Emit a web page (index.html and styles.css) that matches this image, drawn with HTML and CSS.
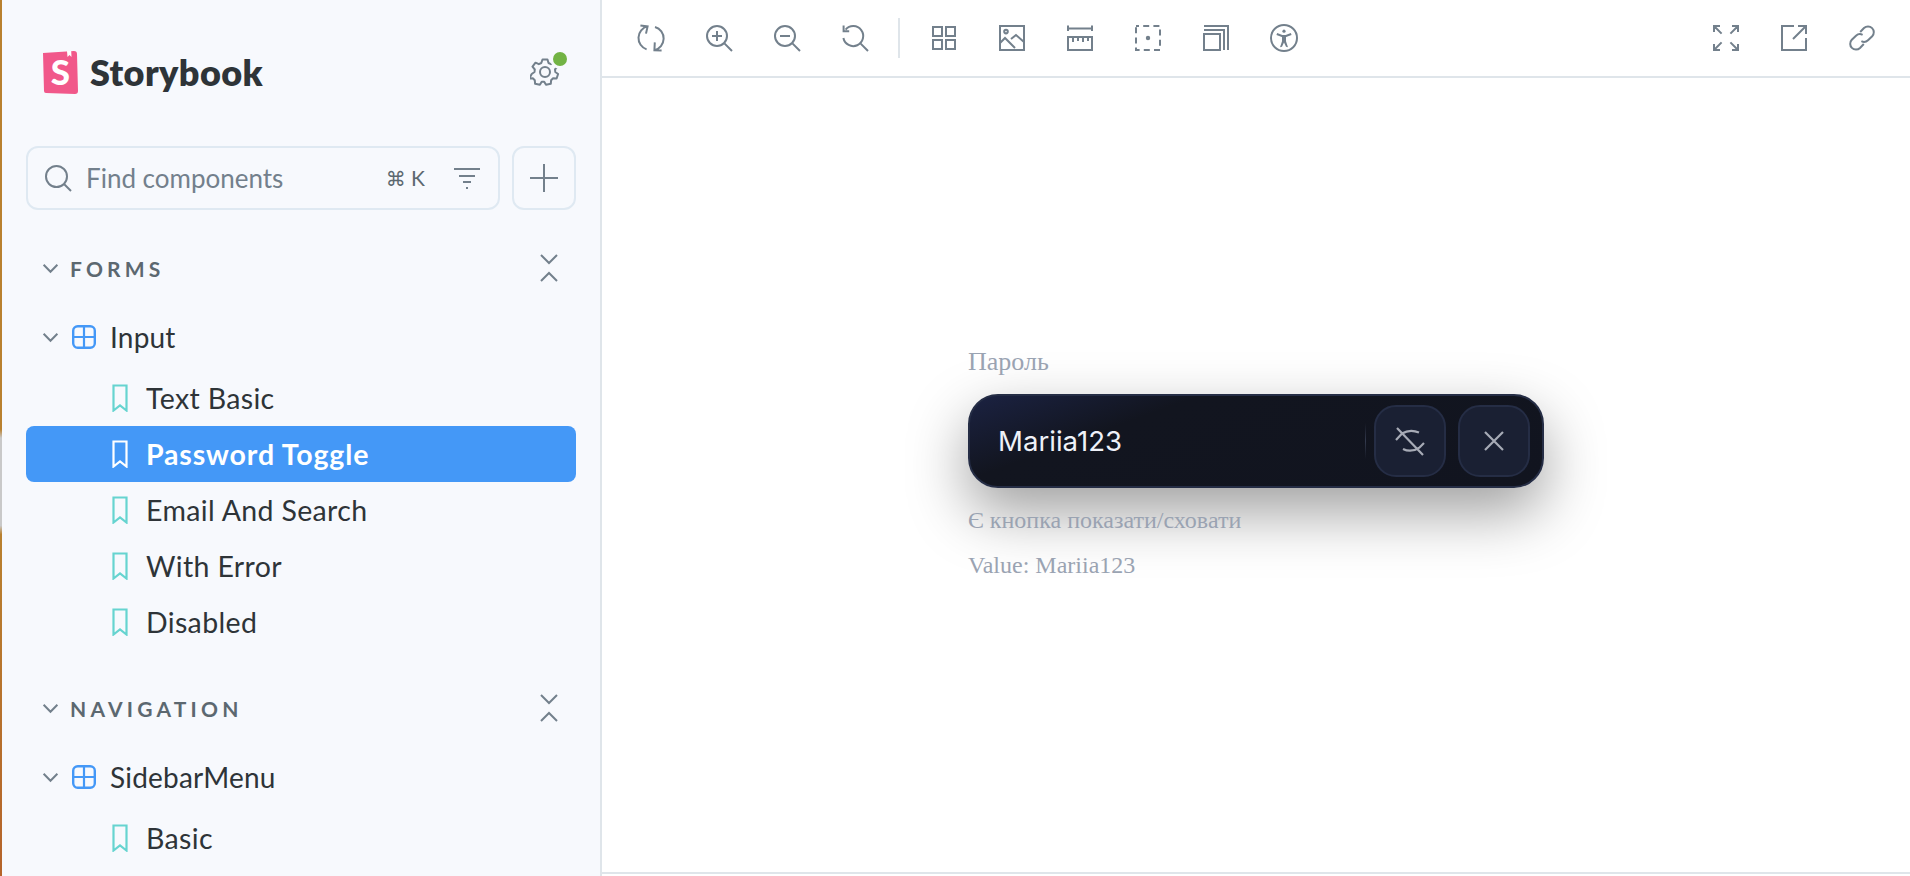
FILE: index.html
```html
<!DOCTYPE html>
<html lang="en">

<head>
    <meta charset="utf-8">
    <title>Storybook</title>
    <link rel="stylesheet" href="styles.css">
</head>

<body>
    <svg class="defs" width="0" height="0">
        <symbol id="bookmark" viewBox="0 0 16 28">
            <path d="M1.500 1.500h13v25L8 21.500l-6.500 5z" fill="none" stroke="currentColor" stroke-width="2.200" />
        </symbol>
        <symbol id="grid" viewBox="0 0 24 24">
            <rect x="1.200" y="1.200" width="21.600" height="21.600" rx="4.500" fill="none" stroke="#4498f7" stroke-width="2.400" />
            <path d="M12 1v22M1 12h22" stroke="#4498f7" stroke-width="2.200" />
        </symbol>
        <symbol id="chevron" viewBox="0 0 18 12">
            <path d="M1.500 2L9 9.500 16.500 2" fill="none" stroke="#73808c" stroke-width="2.200" />
        </symbol>
        <symbol id="collapse" viewBox="0 0 18 28">
            <path d="M1 1l8 8 8-8M1 27l8-8 8 8" fill="none" stroke="#73808c" stroke-width="2" />
        </symbol>
    </svg>

    <div class="window-edge"></div>

    <aside class="sidebar">
        <div class="brand">
            <div class="logo">
                <svg class="logo-mark" width="36" height="44" viewBox="0 0 36 44">
                    <path d="M1 3L32 1q3 0 3 3l1 37q0 3-3 3L4 43q-2 0-2-2z" fill="#f1588a" />
                    <path d="M25 1l.5 6 2-2 2 2-.3-6z" fill="#fff" />
                    <text x="18.500" y="34.500" class="logo-s">S</text>
                </svg>
                <span class="logo-name">Storybook</span>
            </div>
            <div class="settings">
                <svg width="30" height="30" viewBox="0 0 30 30" fill="none" stroke="#73808c" stroke-width="2">
                    <path d="M12.500 2.500h5l1 3.500 2.500 1.200 3.300-1.500 3 4-2.300 2.800.3 2.500 2.800 2-1.500 4.500-3.500-.2-2 2-.3 3.500-4.800 1-1.800-3h-2.500l-1.800 3-4.800-1-.3-3.500-2-2-3.500.2L1.700 17l2.800-2 .3-2.500L2.500 9.700l3-4L8.800 7.200 11.300 6z" stroke-linejoin="round" />
                    <circle cx="15" cy="15" r="5" />
                </svg>
                <span class="status-dot"></span>
            </div>
        </div>

        <div class="search-row">
            <div class="search">
                <svg width="28" height="28" viewBox="0 0 28 28" fill="none" stroke="#73808c" stroke-width="2">
                    <circle cx="12.500" cy="12.500" r="10.500" />
                    <path d="M20 20l7 7" />
                </svg>
                <span class="search-text">Find components</span>
                <span class="shortcut"><span class="cmd">⌘</span> K</span>
                <svg width="26" height="24" viewBox="0 0 26 24" fill="none" stroke="#73808c" stroke-width="2">
                    <path d="M0 3h26M5 10h16M9 16h8M12 22h2" />
                </svg>
            </div>
            <div class="add">
                <svg width="28" height="28" viewBox="0 0 28 28" stroke="#73808c" stroke-width="2">
                    <path d="M14 0v28M0 14h28" />
                </svg>
            </div>
        </div>

        <section class="section">
            <div class="section-head">
                <svg class="chev" width="17" height="11"><use href="#chevron" /></svg>
                <span class="section-title">FORMS</span>
                <svg class="collapse" width="18" height="28"><use href="#collapse" /></svg>
            </div>
            <div class="component">
                <svg class="chev" width="17" height="11"><use href="#chevron" /></svg>
                <svg width="24" height="24"><use href="#grid" /></svg>
                <span>Input</span>
            </div>
            <ul class="stories">
                <li class="story"><svg width="16" height="28"><use href="#bookmark" /></svg>Text Basic</li>
                <li class="story active"><svg width="16" height="28"><use href="#bookmark" /></svg>Password Toggle</li>
                <li class="story"><svg width="16" height="28"><use href="#bookmark" /></svg>Email And Search</li>
                <li class="story"><svg width="16" height="28"><use href="#bookmark" /></svg>With Error</li>
                <li class="story"><svg width="16" height="28"><use href="#bookmark" /></svg>Disabled</li>
            </ul>
        </section>

        <section class="section">
            <div class="section-head">
                <svg class="chev" width="17" height="11"><use href="#chevron" /></svg>
                <span class="section-title">NAVIGATION</span>
                <svg class="collapse" width="18" height="28"><use href="#collapse" /></svg>
            </div>
            <div class="component">
                <svg class="chev" width="17" height="11"><use href="#chevron" /></svg>
                <svg width="24" height="24"><use href="#grid" /></svg>
                <span>SidebarMenu</span>
            </div>
            <ul class="stories">
                <li class="story"><svg width="16" height="28"><use href="#bookmark" /></svg>Basic</li>
            </ul>
        </section>
    </aside>

    <main class="main">
        <div class="toolbar">
            <div class="tools">
                <!-- sync -->
                <svg class="tool" viewBox="0 0 14 14"><path d="M1.700.7l3.600.5-.8 3.600M12.300 13.200l-3.600-.1.200-3.900M5.300 1.200A6 6 0 0 0 4.800 12.700M8.700 13.100A6 6 0 0 0 9 1.500" /></svg>
                <!-- zoom in -->
                <svg class="tool" viewBox="0 0 14 14"><circle cx="6" cy="6" r="5" /><path d="M9.700 9.700l3.800 3.800M6 3.500v5M3.500 6h5" /></svg>
                <!-- zoom out -->
                <svg class="tool" viewBox="0 0 14 14"><circle cx="6" cy="6" r="5" /><path d="M9.700 9.700l3.800 3.800M3.500 6h5" /></svg>
                <!-- zoom reset -->
                <svg class="tool" viewBox="0 0 14 14"><path d="M2.300 2.800A5 5 0 1 1 1.200 7M9.700 9.700l3.800 3.800M1.300.8v2.800h2.800" /></svg>
                <span class="divider"></span>
                <!-- grid -->
                <svg class="tool" viewBox="0 0 14 14"><rect x="1.500" y="1.500" width="4.500" height="4.500" /><rect x="8" y="1.500" width="4.500" height="4.500" /><rect x="1.500" y="8" width="4.500" height="4.500" /><rect x="8" y="8" width="4.500" height="4.500" /></svg>
                <!-- background -->
                <svg class="tool" viewBox="0 0 14 14"><rect x="1" y="1" width="12" height="12" /><circle cx="4" cy="3.800" r=".9" /><path d="M1 9.500l2.500-2.500 5 5M6.500 7.500L9 5.500l4 3.500" /></svg>
                <!-- measure -->
                <svg class="tool" viewBox="0 0 14 14"><path d="M1 .8v2.700M13 .8v2.700M1 2.200h12M3.500 6.500v2.500M6 6.500v2M8.500 6.500v2.500M11 6.500v2" /><rect x="1" y="6.500" width="12" height="6.500" /></svg>
                <!-- outline -->
                <svg class="tool" viewBox="0 0 14 14"><rect x="1" y="1" width="12" height="12" stroke-dasharray="3 2.100" stroke-dashoffset="1.500" /><circle cx="7" cy="7" r=".6" fill="#73808c" /></svg>
                <!-- vision -->
                <svg class="tool" viewBox="0 0 14 14"><rect x="1" y="5" width="8" height="8" /><path d="M1 3h10v10M1 1h12v12" /></svg>
                <!-- a11y -->
                <svg class="tool" viewBox="0 0 14 14"><circle cx="7" cy="7" r="6.500" /><circle cx="7" cy="3.600" r=".8" fill="#73808c" stroke="none" /><path d="M3.400 5l2.600 1h2l2.600-1" /><path d="M6 5.800h2v2.800l1 3-1-.2-1-2.200-1 2.200-1 .2 1-3z" fill="#73808c" stroke="none" /></svg>
            </div>
            <div class="tools">
                <!-- fullscreen -->
                <svg class="tool" viewBox="0 0 14 14"><path d="M1 4V1h3M1 1l3.800 3.800M13 4V1h-3M13 1L9.200 4.800M1 10v3h3M1 13l3.800-3.800M13 10v3h-3M13 13L9.200 9.200" /></svg>
                <!-- open in new tab -->
                <svg class="tool" viewBox="0 0 14 14"><path d="M7 1H1v12h12V7M9 1h4v4M13 1L6.500 7.500" /></svg>
                <!-- link -->
                <svg class="tool" viewBox="0 0 14 14"><path d="M6.100 4L8 2a2.900 2.900 0 0 1 4.100 4.100L10 8.100a2.900 2.900 0 0 1-3.300.5M7.900 10L6 12A2.900 2.900 0 0 1 1.900 7.900L4 5.900a2.900 2.900 0 0 1 3.300-.5" /></svg>
            </div>
        </div>

        <div class="canvas">
            <div class="story-block">
                <label class="field-label">Пароль</label>
                <div class="password-input">
                    <span class="value">Mariia123</span>
                    <span class="input-sep"></span>
                    <button class="input-btn">
                        <svg width="32" height="32" viewBox="0 0 32 32" fill="none" stroke="#a7abb6" stroke-width="2.200">
                            <path d="M3 3l26 27M2 15L8 8.500M8 8.500c5-3 11-3.500 17-1M30 18l-5 5M25 23c-5 3-11 3.500-16 1" />
                        </svg>
                    </button>
                    <button class="input-btn">
                        <svg width="20" height="20" viewBox="0 0 20 20" stroke="#a7abb6" stroke-width="2.200">
                            <path d="M1 1l18 18M19 1L1 19" />
                        </svg>
                    </button>
                </div>
                <p class="hint hint-first">Є кнопка показати/сховати</p>
                <p class="hint">Value: Mariia123</p>
            </div>
        </div>
        <div class="addon-edge"></div>
    </main>
</body>

</html>
```

FILE: styles.css
```css
html {
    height: 100%;
}

body {
    margin: 0;
    height: 876px;
    display: flex;
    overflow: hidden;
    font-family: "Lato", "Open Sans", sans-serif;
    color: #2e3438;
    background: #fff;
}

.defs {
    display: none;
}

.window-edge {
    width: 2px;
    flex: none;
    background: linear-gradient(#b9812f 0, #b9812f 49%, #c9c9c9 50%, #c9c9c9 60%, #b9812f 61%, #b5642b 100%);
}

.sidebar {
    box-sizing: border-box;
    width: 600px;
    flex: none;
    padding: 0 24px;
    overflow: hidden;
    background-color: #f7f9fd;
    border-right: 2px solid #dfe5ea;
}

/* header */
.brand {
    display: flex;
    align-items: center;
    justify-content: space-between;
    height: 44px;
    padding: 0 16px;
    margin-top: 50px;
}

.logo {
    display: flex;
    align-items: center;
    gap: 12px;
}

.logo-s {
    font-family: "Lato", sans-serif;
    font-weight: 900;
    font-size: 35px;
    fill: #fff;
    text-anchor: middle;
}

.logo-name {
    font-size: 36px;
    font-weight: 800;
    letter-spacing: .4px;
    color: #2e3438;
}

.settings {
    position: relative;
    width: 30px;
    height: 30px;
}

.status-dot {
    position: absolute;
    top: -5px;
    right: -7px;
    width: 14px;
    height: 14px;
    border-radius: 50%;
    background: #72b344;
    box-shadow: 0 0 0 3px #f7f9fd;
}

/* search */
.search-row {
    display: flex;
    gap: 12px;
    margin-top: 52px;
}

.search,
.add {
    box-sizing: border-box;
    height: 64px;
    display: flex;
    align-items: center;
    border: 2px solid #dfe9f2;
    border-radius: 12px;
}

.search {
    flex: 1;
    padding: 0 18px 0 16px;
}

.add {
    width: 64px;
    flex: none;
    justify-content: center;
}

.search-text {
    flex: 1;
    margin-left: 14px;
    font-size: 26px;
    color: #73808c;
}

.shortcut {
    margin-right: 29px;
    font-size: 21px;
    color: #5c6870;
}

.cmd {
    font-family: "DejaVu Sans", sans-serif;
    font-size: 20px;
}

/* tree */
.section {
    margin-top: 30px;
}

.section-head {
    display: flex;
    align-items: center;
    height: 56px;
    padding-left: 16px;
    margin-bottom: 13px;
}

.section-title {
    flex: 1;
    margin-left: 11px;
    font-size: 21px;
    font-weight: 700;
    letter-spacing: 4.200px;
    color: #5c6870;
}

.collapse {
    margin-right: 18px;
}

.component {
    display: flex;
    align-items: center;
    height: 56px;
    padding-left: 16px;
    font-size: 28px;
    letter-spacing: .2px;
    color: #2e3438;
}

.component svg + svg {
    margin-left: 13px;
}

.component span {
    margin-left: 14px;
}

.stories {
    list-style: none;
    margin: 5px 0 0;
    padding: 0;
}

.story {
    display: flex;
    align-items: center;
    gap: 18px;
    height: 56px;
    padding-left: 86px;
    border-radius: 8px;
    font-size: 28.500px;
    letter-spacing: .35px;
    color: #2e3438;
}

.story svg {
    color: #66d4d0;
}

.story.active {
    font-weight: 700;
    letter-spacing: .85px;
    color: #fff;
    background: #4498f7;
}

.story.active svg {
    color: #fff;
}

/* toolbar */
.main {
    flex: 1;
    min-width: 0;
    display: flex;
    flex-direction: column;
}

.toolbar {
    box-sizing: border-box;
    height: 78px;
    flex: none;
    display: flex;
    justify-content: space-between;
    align-items: center;
    padding: 0 34px 0 35px;
    border-bottom: 2px solid #dfe5ea;
}

.tools {
    display: flex;
    align-items: center;
    gap: 40px;
}

.tool {
    width: 28px;
    height: 28px;
    fill: none;
    stroke: #73808c;
    stroke-width: 1;
}

.divider {
    width: 2px;
    height: 40px;
    margin: 0 -10px 0 -11px;
    background: #dfe5ea;
}

/* story canvas */
.canvas {
    flex: 1;
    display: flex;
    justify-content: center;
    align-items: center;
    padding-bottom: 24px;
}

.story-block {
    width: 576px;
    font-family: "Liberation Serif", serif;
    color: #9aa3b2;
}

.field-label {
    display: block;
    font-size: 26px;
    line-height: 32px;
    margin-bottom: 16px;
}

.password-input {
    box-sizing: border-box;
    height: 94px;
    display: flex;
    align-items: center;
    padding: 0 12px 0 28px;
    border: 2px solid #252d45;
    border-radius: 30px;
    background: linear-gradient(160deg, #1b2242 0%, #12151f 28%, #11141f 100%);
    box-shadow: 0 24px 60px rgba(0, 0, 0, .38);
}

.value {
    flex: 1;
    font-family: "Inter", sans-serif;
    font-size: 27.600px;
    color: #eef1f8;
}

.input-sep {
    width: 1px;
    height: 36px;
    margin-right: 8px;
    background: linear-gradient(transparent, #333a4d, transparent);
}

.input-btn {
    box-sizing: border-box;
    width: 72px;
    height: 72px;
    margin-left: 12px;
    padding: 0;
    display: flex;
    align-items: center;
    justify-content: center;
    border: 2px solid #252d45;
    border-radius: 22px;
    background: #1a2033;
}

.input-sep + .input-btn {
    margin-left: 0;
}

.hint {
    margin: 0;
    font-size: 24px;
    line-height: 32px;
    padding-top: 13px;
}

.hint-first {
    padding-top: 16px;
}

.addon-edge {
    box-sizing: border-box;
    height: 4px;
    flex: none;
    border-top: 2px solid #dfe5ea;
}
```
